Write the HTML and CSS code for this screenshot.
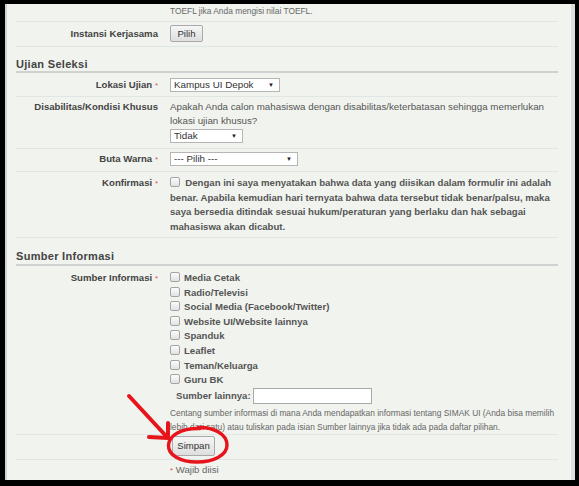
FILE: index.html
```html
<!DOCTYPE html>
<html>
<head>
<meta charset="utf-8">
<link rel="stylesheet" href="styles.css">
</head>
<body>
<div class="screen">
  <div class="panel">
    <div class="row row-top">
      <div class="label"></div>
      <div class="value help">TOEFL jika Anda mengisi nilai TOEFL.</div>
    </div>
    <div class="row row-btn">
      <div class="label">Instansi Kerjasama</div>
      <div class="value"><span class="btn btn-pilih">Pilih</span></div>
    </div>
    <h2 class="section">Ujian Seleksi</h2>
    <div class="row row-sel">
      <div class="label">Lokasi Ujian <span class="req">*</span></div>
      <div class="value"><span class="select sel-lokasi">Kampus UI Depok<span class="arrow">▼</span></span></div>
    </div>
    <div class="row row-dis">
      <div class="label">Disabilitas/Kondisi Khusus</div>
      <div class="value">
        <div class="desc">Apakah Anda calon mahasiswa dengan disabilitas/keterbatasan sehingga memerlukan lokasi ujian khusus?</div>
        <span class="select sel-tidak">Tidak<span class="arrow">▼</span></span>
      </div>
    </div>
    <div class="row row-sel2">
      <div class="label">Buta Warna <span class="req">*</span></div>
      <div class="value"><span class="select sel-pilih">--- Pilih ---<span class="arrow">▼</span></span></div>
    </div>
    <div class="row row-konf">
      <div class="label lbl-normal">Konfirmasi <span class="req">*</span></div>
      <div class="value konf"><span class="cb"></span>&nbsp; Dengan ini saya menyatakan bahwa data yang diisikan dalam formulir ini adalah benar. Apabila kemudian hari ternyata bahwa data tersebut tidak benar/palsu, maka saya bersedia ditindak sesuai hukum/peraturan yang berlaku dan hak sebagai mahasiswa akan dicabut.</div>
    </div>
    <h2 class="section section2">Sumber Informasi</h2>
    <div class="row row-sumber">
      <div class="label">Sumber Informasi <span class="req">*</span></div>
      <div class="value">
        <ul class="checks">
          <li><span class="cb"></span>Media Cetak</li>
          <li><span class="cb"></span>Radio/Televisi</li>
          <li><span class="cb"></span>Social Media (Facebook/Twitter)</li>
          <li><span class="cb"></span>Website UI/Website lainnya</li>
          <li><span class="cb"></span>Spanduk</li>
          <li><span class="cb"></span>Leaflet</li>
          <li><span class="cb"></span>Teman/Keluarga</li>
          <li><span class="cb"></span>Guru BK</li>
        </ul>
        <div class="lainnya"><span class="lain-label">Sumber lainnya:</span><span class="input"></span></div>
        <div class="help help2">Centang sumber informasi di mana Anda mendapatkan informasi tentang SIMAK UI (Anda bisa memilih lebih dari satu) atau tuliskan pada isian Sumber lainnya jika tidak ada pada daftar pilihan.</div>
      </div>
    </div>
    <div class="row row-submit">
      <div class="label"></div>
      <div class="value"><span class="btn btn-simpan">Simpan</span></div>
    </div>
    <div class="row row-wajib">
      <div class="label"></div>
      <div class="value wajib"><span class="req">*</span> Wajib diisi</div>
    </div>
  </div>
  <svg class="annot" width="579" height="486" viewBox="0 0 579 486">
    <g fill="none" stroke="#e8141c" stroke-linecap="round" stroke-linejoin="round">
      <path d="M129 396 L167 437" stroke-width="4"/>
      <path d="M149 437 L168 438 L168 423" stroke-width="4"/>
      <path d="M198 427.5 C214 427 227 434 227 445 C227 455 214 462 197 462 C180 462 168 455 168.5 445 C169 436 180 428 200 428.5" stroke-width="3.4"/>
    </g>
  </svg>
</div>
</body>
</html>
```
FILE: styles.css
```css
html, body {
  margin: 0;
  padding: 0;
  background: #000;
}
.screen {
  position: relative;
  width: 579px;
  height: 486px;
  box-sizing: border-box;
  padding: 4px 4px 6px 5px;
  overflow: hidden;
}
.panel {
  height: 476px;
  box-sizing: border-box;
  background: #f1f3ee;
  border-left: 2px solid #d2d2d2;
  border-right: 4px solid #dcdcdc;
  padding: 0 13px 0 9px;
  overflow: hidden;
  font-family: "Liberation Sans", Arial, sans-serif;
  color: #444;
}
.row {
  display: grid;
  grid-template-columns: 142px 1fr;
  column-gap: 12px;
  border-bottom: 1px solid #dfe6e6;
  align-items: start;
}
.label {
  text-align: right;
  font-weight: bold;
  font-size: 9.6px;
  color: #444;
  line-height: 14px;
}
.req {
  color: #d9534f;
  font-weight: normal;
  font-size: 8px;
}
.value {
  font-size: 9.6px;
  line-height: 14px;
  color: #555;
}
.help {
  font-size: 8.4px;
  color: #666;
  line-height: 14px;
}
.row-top { height: 17px; }
.row-btn { box-sizing: border-box; height: 25px; padding-top: 3px; }
.row-btn .label { padding-top: 2px; }
.btn {
  display: inline-block;
  box-sizing: border-box;
  border: 1px solid #a9a9a9;
  border-radius: 2px;
  background: linear-gradient(#f6f6f6, #dedede);
  color: #333;
  font-size: 9.6px;
  text-align: center;
}
.btn-pilih { width: 33px; height: 17px; line-height: 15px; }
.btn-simpan { width: 43px; height: 20px; line-height: 18px; margin-left: 2px; }
.section {
  margin: 0;
  font-size: 11px;
  font-weight: bold;
  color: #444;
  letter-spacing: 0.3px;
  height: 26px;
  box-sizing: border-box;
  padding-top: 10px;
  line-height: 14px;
  border-bottom: 2px solid #cfd2d0;
}
.section2 { padding-top: 11px; height: 28px; }
.row-sel { height: 24px; box-sizing: border-box; padding-top: 5px; }
.select {
  display: inline-block;
  position: relative;
  box-sizing: border-box;
  height: 14px;
  line-height: 12px;
  background: #fff;
  border: 1px solid #b5b5b5;
  padding-left: 3px;
  color: #333;
  font-size: 9.8px;
  vertical-align: top;
}
.arrow {
  position: absolute;
  right: 5px;
  top: 0;
  font-size: 6px;
  color: #222;
}
.sel-lokasi { width: 110px; }
.sel-tidak { width: 73px; }
.sel-pilih { width: 128px; }
.row-dis { height: 52px; box-sizing: border-box; padding-top: 3px; }
.desc { margin-bottom: 1px; font-size: 9.75px; }
.row-sel2 { height: 23px; box-sizing: border-box; padding-top: 3px; }
.row-konf { height: 66px; box-sizing: border-box; padding-top: 4px; }
.konf { font-weight: bold; line-height: 14.5px; color: #555; padding-right: 6px; }
.cb {
  display: inline-block;
  width: 10px;
  height: 10px;
  border: 1px solid #a4a4a4;
  border-radius: 2px;
  background: linear-gradient(#fbfbfb, #e2e2e2);
  vertical-align: -1px;
  box-sizing: border-box;
}
.checks {
  list-style: none;
  margin: 0;
  padding: 0;
}
.checks li {
  font-weight: bold;
  line-height: 14.6px;
  height: 14.6px;
}
.checks .cb { margin-right: 4px; }
.row-sumber { height: 169px; box-sizing: border-box; padding-top: 5px; }
.lainnya {
  display: flex;
  align-items: center;
  height: 17px;
  margin-top: 0;
  padding-left: 6px;
}
.lain-label { font-weight: bold; margin-right: 2px; }
.input {
  display: inline-block;
  width: 119px;
  height: 16px;
  box-sizing: border-box;
  background: #fff;
  border: 1px solid #a9a9a9;
}
.help2 { line-height: 14px; margin-top: 1px; padding-right: 2px; }
.row-submit { height: 25px; box-sizing: border-box; padding-top: 1px; }
.row-wajib { border-bottom: none; padding-top: 3px; }
.wajib { color: #666; }
.annot {
  position: absolute;
  left: 0;
  top: 0;
  pointer-events: none;
}
```
